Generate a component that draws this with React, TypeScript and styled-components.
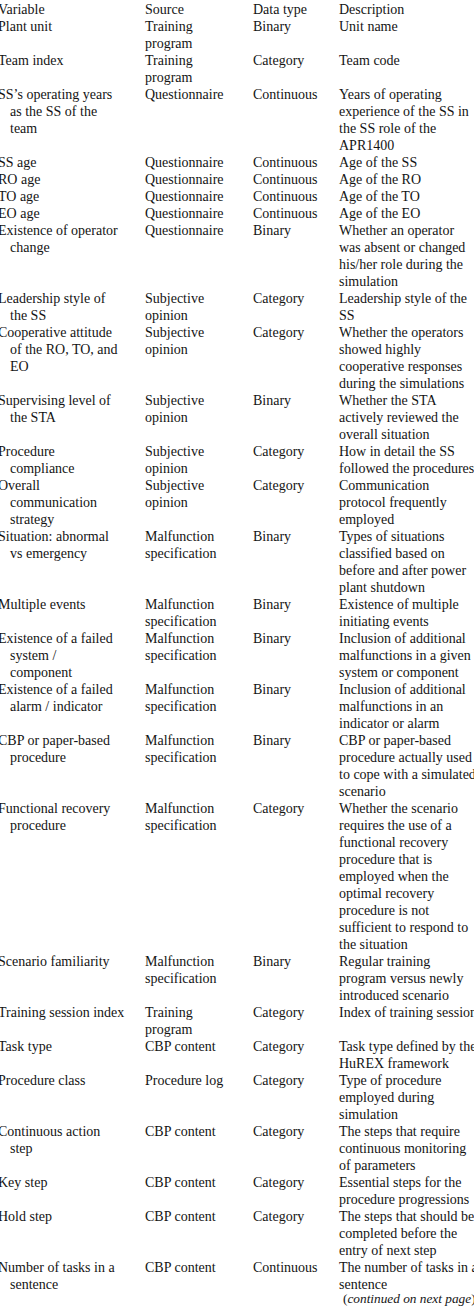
import React from 'react'
import styled, { createGlobalStyle } from 'styled-components'

const GlobalStyle = createGlobalStyle`
  html, body {
    margin: 0;
    padding: 0;
    background: #fff;
    overflow-x: hidden;
  }
`

export const Page = styled.div`
  font-family: 'Liberation Serif', 'Times New Roman', serif;
  font-size: 14px;
  line-height: 17px;
  color: #141414;
  margin-left: -2px;
  padding-top: 1px;
  width: 490px;
`

export const Row = styled.div`
  display: grid;
  grid-template-columns: 147px 108px 86px 150px;
`

export const Cell = styled.div`
  display: flex;
  flex-flow: column;
  white-space: nowrap;
`

export const VarCell = styled(Cell)`
  & > span + span {
    padding-left: 12px;
  }
`

export const Continued = styled.div`
  margin-top: -3px;
  padding-left: 345px;
  font-size: 13.3px;
  white-space: nowrap;
  em {
    font-style: italic;
  }
`

type Entry = [string[], string[], string, string[]]

const rows: Entry[] = [
  [['Variable'], ['Source'], 'Data type', ['Description']],
  [['Plant unit'], ['Training', 'program'], 'Binary', ['Unit name']],
  [['Team index'], ['Training', 'program'], 'Category', ['Team code']],
  [
    ['SS\u2019s operating years', 'as the SS of the', 'team'],
    ['Questionnaire'],
    'Continuous',
    ['Years of operating', 'experience of the SS in', 'the SS role of the', 'APR1400'],
  ],
  [['SS age'], ['Questionnaire'], 'Continuous', ['Age of the SS']],
  [['RO age'], ['Questionnaire'], 'Continuous', ['Age of the RO']],
  [['TO age'], ['Questionnaire'], 'Continuous', ['Age of the TO']],
  [['EO age'], ['Questionnaire'], 'Continuous', ['Age of the EO']],
  [
    ['Existence of operator', 'change'],
    ['Questionnaire'],
    'Binary',
    ['Whether an operator', 'was absent or changed', 'his/her role during the', 'simulation'],
  ],
  [['Leadership style of', 'the SS'], ['Subjective', 'opinion'], 'Category', ['Leadership style of the', 'SS']],
  [
    ['Cooperative attitude', 'of the RO, TO, and', 'EO'],
    ['Subjective', 'opinion'],
    'Category',
    ['Whether the operators', 'showed highly', 'cooperative responses', 'during the simulations'],
  ],
  [
    ['Supervising level of', 'the STA'],
    ['Subjective', 'opinion'],
    'Binary',
    ['Whether the STA', 'actively reviewed the', 'overall situation'],
  ],
  [
    ['Procedure', 'compliance'],
    ['Subjective', 'opinion'],
    'Category',
    ['How in detail the SS', 'followed the procedures'],
  ],
  [
    ['Overall', 'communication', 'strategy'],
    ['Subjective', 'opinion'],
    'Category',
    ['Communication', 'protocol frequently', 'employed'],
  ],
  [
    ['Situation: abnormal', 'vs emergency'],
    ['Malfunction', 'specification'],
    'Binary',
    ['Types of situations', 'classified based on', 'before and after power', 'plant shutdown'],
  ],
  [
    ['Multiple events'],
    ['Malfunction', 'specification'],
    'Binary',
    ['Existence of multiple', 'initiating events'],
  ],
  [
    ['Existence of a failed', 'system /', 'component'],
    ['Malfunction', 'specification'],
    'Binary',
    ['Inclusion of additional', 'malfunctions in a given', 'system or component'],
  ],
  [
    ['Existence of a failed', 'alarm / indicator'],
    ['Malfunction', 'specification'],
    'Binary',
    ['Inclusion of additional', 'malfunctions in an', 'indicator or alarm'],
  ],
  [
    ['CBP or paper-based', 'procedure'],
    ['Malfunction', 'specification'],
    'Binary',
    ['CBP or paper-based', 'procedure actually used', 'to cope with a simulated', 'scenario'],
  ],
  [
    ['Functional recovery', 'procedure'],
    ['Malfunction', 'specification'],
    'Category',
    [
      'Whether the scenario',
      'requires the use of a',
      'functional recovery',
      'procedure that is',
      'employed when the',
      'optimal recovery',
      'procedure is not',
      'sufficient to respond to',
      'the situation',
    ],
  ],
  [
    ['Scenario familiarity'],
    ['Malfunction', 'specification'],
    'Binary',
    ['Regular training', 'program versus newly', 'introduced scenario'],
  ],
  [['Training session index'], ['Training', 'program'], 'Category', ['Index of training session']],
  [['Task type'], ['CBP content'], 'Category', ['Task type defined by the', 'HuREX framework']],
  [
    ['Procedure class'],
    ['Procedure log'],
    'Category',
    ['Type of procedure', 'employed during', 'simulation'],
  ],
  [
    ['Continuous action', 'step'],
    ['CBP content'],
    'Category',
    ['The steps that require', 'continuous monitoring', 'of parameters'],
  ],
  [['Key step'], ['CBP content'], 'Category', ['Essential steps for the', 'procedure progressions']],
  [
    ['Hold step'],
    ['CBP content'],
    'Category',
    ['The steps that should be', 'completed before the', 'entry of next step'],
  ],
  [['Number of tasks in a', 'sentence'], ['CBP content'], 'Continuous', ['The number of tasks in a', 'sentence']],
]

export default function App() {
  return (
    <>
      <GlobalStyle />
      <Page>
        {rows.map(([variable, source, type, desc], i) => (
          <Row key={i}>
            <VarCell>
              {variable.map((l) => <span key={l}>{l}</span>)}
            </VarCell>
            <Cell>
              {source.map((l) => <span key={l}>{l}</span>)}
            </Cell>
            <Cell>
              <span>{type}</span>
            </Cell>
            <Cell>
              {desc.map((l) => <span key={l}>{l}</span>)}
            </Cell>
          </Row>
        ))}
        <Continued>
          (<em>continued on next page</em>)
        </Continued>
      </Page>
    </>
  )
}
